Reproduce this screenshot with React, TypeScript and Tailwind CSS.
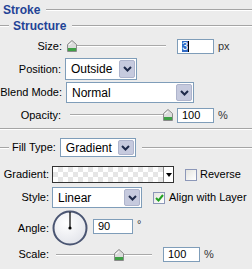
import React from 'react'

const font = { fontFamily: '"Liberation Sans", Arial, sans-serif' }

function Etched({ className = '' }: { className?: string }) {
  return <div className={`h-[2px] border-t border-[#a5a5a5] border-b border-b-white ${className}`} />
}

function Chevron() {
  return (
    <svg width="9" height="6" viewBox="0 0 9 6">
      <path d="M1 1 L4.5 4.5 L8 1" fill="none" stroke="#1e2a4a" strokeWidth="2" />
    </svg>
  )
}

function Dropdown({ text, w, h }: { text: string; w: string; h: string }) {
  return (
    <div className={`${w} ${h} flex items-stretch border border-[#7f9db9] bg-white p-px`}>
      <span className="flex-1 pl-[4px] flex items-center text-[12px] text-black">{text}</span>
      <div className="w-[16px] flex items-center justify-center bg-[#c6cade] border border-[#aeb4cc] rounded-[2px]">
        <Chevron />
      </div>
    </div>
  )
}

function Thumb() {
  return (
    <svg width="10" height="12" viewBox="0 0 10 12">
      <path d="M0.5 11.5 V4.5 L5 0.5 L9.5 4.5 V11.5 Z" fill="#dcdcdc" stroke="#8a8a8a" />
      <path d="M1 8 H9 V11 H1 Z" fill="#3fa046" />
      <path d="M2 5 L5 2.5" stroke="#ffffff" />
    </svg>
  )
}

function Slider({ w, pos }: { w: string; pos: string }) {
  return (
    <div className={`relative ${w} h-[12px] flex items-center`}>
      <div className="w-full h-[2px] border-t border-[#a9a9a9] border-b border-b-white" />
      <div className={`absolute top-0 ${pos}`}>
        <Thumb />
      </div>
    </div>
  )
}

function Field({ value, w, selected }: { value: string; w: string; selected?: boolean }) {
  return (
    <div className={`${w} h-[15px] border border-[#7f9db9] bg-white flex items-center pl-[4px] text-[11px] text-black`}>
      {selected ? (
        <>
          <span className="bg-[#316ac5] text-white leading-[11px]">{value}</span>
          <span className="w-px h-[11px] bg-black" />
        </>
      ) : (
        value
      )}
    </div>
  )
}

function Checkbox({ checked }: { checked?: boolean }) {
  return (
    <div className="w-[12px] h-[12px] border border-[#8c97b8] bg-gradient-to-br from-[#e4e4e0] to-white flex items-center justify-center">
      {checked && (
        <svg width="9" height="8" viewBox="0 0 9 8">
          <path d="M1 4 L3.5 6.5 L8 1" fill="none" stroke="#21a121" strokeWidth="2" />
        </svg>
      )}
    </div>
  )
}

export default function App() {
  return (
    <div className="w-[252px] h-[269px] bg-[#ececec] overflow-hidden text-[11px] text-black whitespace-nowrap [&_*]:shrink-0" style={font}>
      {/* Stroke */}
      <div className="h-[20px] flex items-center pl-[3px]">
        <span className="font-bold text-[12px] text-[#1f4396]">Stroke</span>
        <Etched className="!shrink flex-1 ml-[6px]" />
      </div>

      {/* Structure */}
      <div className="h-[12px] flex items-center">
        <Etched className="w-[9px]" />
        <span className="font-bold text-[12px] text-[#1f4396] ml-[4px]">Structure</span>
        <Etched className="!shrink flex-1 ml-[6px]" />
      </div>

      <div className="mt-[6px] h-[16px] flex items-center">
        <span className="w-[62px] text-right">Size:</span>
        <div className="ml-[5px]">
          <Slider w="w-[99px]" pos="left-0" />
        </div>
        <div className="ml-[11px]">
          <Field value="3" w="w-[37px]" selected />
        </div>
        <span className="ml-[4px] text-[#333]">px</span>
      </div>

      <div className="mt-[4px] h-[22px] flex items-center">
        <span className="w-[61px] text-right">Position:</span>
        <div className="ml-[4px]">
          <Dropdown text="Outside" w="w-[72px]" h="h-[22px]" />
        </div>
      </div>

      <div className="mt-[2px] h-[21px] flex items-center">
        <span className="w-[62px] text-right">Blend Mode:</span>
        <div className="ml-[4px]">
          <Dropdown text="Normal" w="w-[128px]" h="h-[21px]" />
        </div>
      </div>

      <div className="mt-[5px] h-[14px] flex items-center">
        <span className="w-[61px] text-right">Opacity:</span>
        <div className="ml-[9px]">
          <Slider w="w-[103px]" pos="right-0" />
        </div>
        <div className="ml-[4px]">
          <Field value="100" w="w-[37px]" />
        </div>
        <span className="ml-[4px] text-[#333]">%</span>
      </div>

      <Etched className="mt-[6px]" />

      {/* Fill Type */}
      <div className="mt-[8px] h-[19px] flex items-center">
        <Etched className="w-[9px]" />
        <span className="ml-[3px]">Fill Type:</span>
        <div className="ml-[4px]">
          <Dropdown text="Gradient" w="w-[76px]" h="h-[19px]" />
        </div>
        <Etched className="!shrink flex-1 ml-[6px]" />
      </div>

      <div className="mt-[9px] h-[17px] flex items-center">
        <span className="w-[49px] text-right">Gradient:</span>
        <div className="ml-[3px] w-[122px] h-[17px] border border-[#333] bg-white flex">
          <div className="!shrink flex-1 bg-[repeating-conic-gradient(#e6e6e6_0%_25%,#ffffff_0%_50%)] bg-[length:10px_10px]" />
          <div className="w-[10px] border-l border-[#888] flex items-center justify-center">
            <svg width="6" height="4" viewBox="0 0 6 4">
              <path d="M0 0 H6 L3 4 Z" fill="#000" />
            </svg>
          </div>
        </div>
        <div className="ml-[11px]">
          <Checkbox />
        </div>
        <span className="ml-[3px]">Reverse</span>
      </div>

      <div className="mt-[4px] h-[21px] flex items-center">
        <span className="w-[49px] text-right">Style:</span>
        <div className="ml-[3px]">
          <Dropdown text="Linear" w="w-[90px]" h="h-[21px]" />
        </div>
        <div className="ml-[11px]">
          <Checkbox checked />
        </div>
        <span className="ml-[4px]">Align with Layer</span>
      </div>

      <div className="mt-[2px] h-[36px] flex items-center">
        <span className="w-[49px] text-right">Angle:</span>
        <div className="ml-[3px] w-[36px] h-[36px]">
          <svg width="36" height="36" viewBox="0 0 36 36">
            <defs>
              <radialGradient id="dial" cx="40%" cy="35%" r="70%">
                <stop offset="0%" stopColor="#ffffff" />
                <stop offset="100%" stopColor="#e2e4ea" />
              </radialGradient>
            </defs>
            <circle cx="18" cy="18" r="16.5" fill="url(#dial)" stroke="#4a5572" strokeWidth="2" />
            <line x1="18" y1="18" x2="18" y2="2" stroke="#000" strokeWidth="1.2" />
            <circle cx="18" cy="18" r="1.6" fill="#000" />
          </svg>
        </div>
        <div className="ml-[5px] self-start mt-[9px]">
          <Field value="90" w="w-[40px]" />
        </div>
        <span className="ml-[4px] self-start mt-[6px] text-[#333]">°</span>
      </div>

      <div className="mt-[1px] h-[15px] flex items-center">
        <span className="w-[49px] text-right">Scale:</span>
        <div className="ml-[7px]">
          <Slider w="w-[96px]" pos="left-[58px]" />
        </div>
        <div className="ml-[11px]">
          <Field value="100" w="w-[37px]" />
        </div>
        <span className="ml-[4px] text-[#333]">%</span>
      </div>
    </div>
  )
}
